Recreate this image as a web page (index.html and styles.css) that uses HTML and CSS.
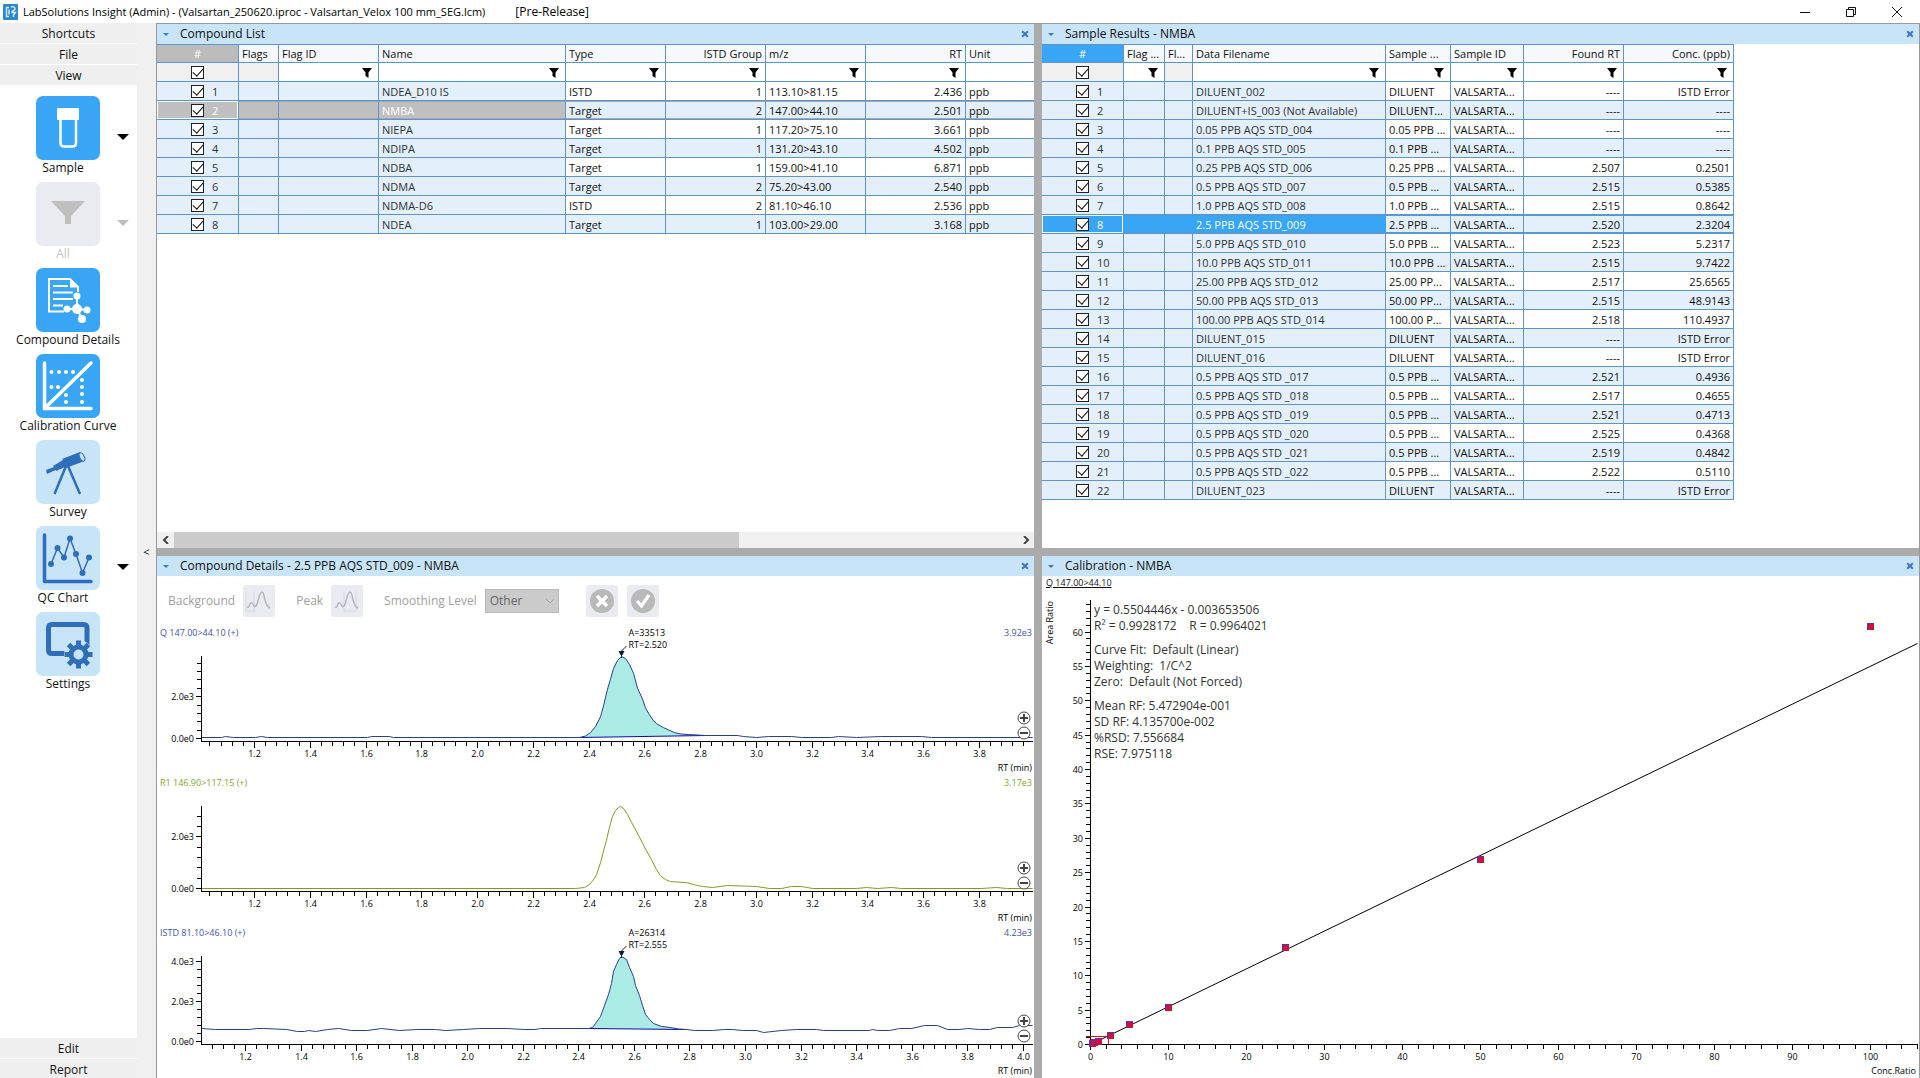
FILE: index.html
```html
<!DOCTYPE html>
<html lang="en">
<head>
<meta charset="utf-8">
<title>LabSolutions Insight</title>
<link rel="stylesheet" href="styles.css">
</head>
<body>
<div class="app">
  <header class="titlebar">
    <svg class="app-icon" viewBox="0 0 15 16" aria-hidden="true">
      <rect width="15" height="16" rx="1" fill="#2b86d3"/>
      <path d="M6 3.500H3.500V12.500H6M6 5.500V10.500M8 3C10 2 12 3 12 5S9 6.500 9 8M8.500 8.500H12.500L10.500 11V13" fill="none" stroke="#d9efff" stroke-width="1.400"/>
    </svg>
    <h1 class="title">LabSolutions Insight (Admin) - (Valsartan_250620.iproc - Valsartan_Velox 100 mm_SEG.lcm)</h1>
    <span class="edition">[Pre-Release]</span>
    <div class="window-buttons">
      <button type="button" aria-label="Minimize"><svg viewBox="0 0 12 12"><path d="M1 6.500H11"/></svg></button>
      <button type="button" aria-label="Restore"><svg viewBox="0 0 12 12"><path d="M1.500 3.500H8.500V10.500H1.500ZM3.500 3.500V1.500H10.500V8.500H8.500"/></svg></button>
      <button type="button" aria-label="Close"><svg viewBox="0 0 12 12"><path d="M1 1L11 11M11 1L1 11"/></svg></button>
    </div>
  </header>

  <div class="main">
    <nav class="sidebar">
      <button type="button" class="group">Shortcuts</button>
      <button type="button" class="group">File</button>
      <button type="button" class="group">View</button>
      <ul class="tools">
        <li class="tool has-menu">
          <button type="button" class="tool-button"><span class="tile on"><svg viewBox="0 0 64 64"><rect x="21" y="12" width="22" height="12" rx="1" fill="#fff"/><path d="M24.500 24V47Q24.500 50.500 28 50.500H36.500Q40 50.500 40 47V24" fill="none" stroke="#fff" stroke-width="2.500"/></svg></span><span class="tool-name">Sample</span></button>
          <button type="button" class="drop" aria-label="Sample options"></button>
        </li>
        <li class="tool has-menu">
          <button type="button" class="tool-button" disabled><span class="tile off"><svg viewBox="0 0 64 64"><path d="M15 19H49L35 34V42H29V34Z" fill="#bfbfbf"/></svg></span><span class="tool-name">All</span></button>
          <button type="button" class="drop" aria-label="Filter options" disabled></button>
        </li>
        <li class="tool">
          <button type="button" class="tool-button"><span class="tile on"><svg viewBox="0 0 64 64"><g fill="none" stroke="#fff" stroke-width="2"><path d="M28 43.500H13V11H34L42 19V24M17 18H32M17 24.500H37M17 31H37M17 37.500H27"/><path d="M41 41V28M41 41L31 41M41 41L51 42M41 41L46 51"/></g><path d="M34 10.500L42.500 19.500H34Z" fill="#fff"/><g fill="#fff"><circle cx="41" cy="41" r="5"/><circle cx="41" cy="28" r="3.500"/><circle cx="31" cy="41" r="3.500"/><circle cx="51" cy="42" r="3.500"/><circle cx="46" cy="51" r="4"/></g></svg></span><span class="tool-name">Compound Details</span></button>
        </li>
        <li class="tool">
          <button type="button" class="tool-button"><span class="tile on"><svg viewBox="0 0 64 64"><path d="M8.500 9V54.500H55M10 53L55 9" fill="none" stroke="#fff" stroke-width="3.500" stroke-linecap="round"/><g fill="#fff"><circle cx="15.500" cy="18" r="2"/><circle cx="23" cy="18" r="2"/><circle cx="30" cy="18" r="2"/><circle cx="37" cy="18" r="2"/><circle cx="15.500" cy="33" r="2"/><circle cx="22" cy="33" r="2"/><circle cx="30" cy="41" r="2"/><circle cx="30" cy="48" r="2"/><circle cx="46" cy="26" r="2"/><circle cx="46" cy="33" r="2"/><circle cx="46" cy="40" r="2"/><circle cx="46" cy="48" r="2"/></g></svg></span><span class="tool-name">Calibration Curve</span></button>
        </li>
        <li class="tool">
          <button type="button" class="tool-button"><span class="tile"><svg viewBox="0 0 64 64"><path d="M10 30L18 27L17 26L27 20L26 19L44 12L48.500 21L30 28L29 27L20 31L19.500 30L11 34Z" fill="#2f6eba"/><ellipse cx="46" cy="17" rx="2.300" ry="4.500" transform="rotate(-25 46 17)" fill="#c8e4f8" stroke="#2f6eba" stroke-width="1"/><path d="M30 26L18.500 54M32 26L44 54" stroke="#2f6eba" stroke-width="2.500" fill="none"/></svg></span><span class="tool-name">Survey</span></button>
        </li>
        <li class="tool has-menu">
          <button type="button" class="tool-button"><span class="tile"><svg viewBox="0 0 64 64"><path d="M8.500 9V55.500H55" fill="none" stroke="#2f6eba" stroke-width="3.500" stroke-linecap="round" stroke-linejoin="round"/><path d="M15 38L21.500 22L28 31.500L34 12.500L40 28L46.500 47L53 31.500" fill="none" stroke="#2f6eba" stroke-width="1.500"/><g fill="#2f6eba"><circle cx="15" cy="38" r="3"/><circle cx="21.500" cy="22" r="3"/><circle cx="28" cy="31.500" r="3"/><circle cx="34" cy="12.500" r="3"/><circle cx="40" cy="28" r="3"/><circle cx="46.500" cy="47" r="3"/><circle cx="53" cy="31.500" r="3"/></g></svg></span><span class="tool-name">QC Chart</span></button>
          <button type="button" class="drop" aria-label="QC Chart options"></button>
        </li>
        <li class="tool">
          <button type="button" class="tool-button"><span class="tile"><svg viewBox="0 0 64 64"><path d="M51 33V16Q51 12.500 47.500 12.500H16Q12.500 12.500 12.500 16V38Q12.500 41.500 16 41.500H29" fill="none" stroke="#2f6eba" stroke-width="5"/><circle cx="42.500" cy="42.500" r="14.500" fill="#c8e4f8"/><circle cx="42.500" cy="42.500" r="7.500" fill="none" stroke="#2f6eba" stroke-width="5"/><path d="M42.500 28.500V33M42.500 52V56.500M28.500 42.500H33M52 42.500H56.500M32.600 32.600L36 36M49 49L52.400 52.400M52.400 32.600L49 36M36 49L32.600 52.400" stroke="#2f6eba" stroke-width="5"/></svg></span><span class="tool-name">Settings</span></button>
        </li>
      </ul>
      <button type="button" class="group">Edit</button>
      <button type="button" class="group">Report</button>
    </nav>
    <button type="button" class="collapse" aria-label="Collapse sidebar">&lt;</button>

    <main class="workspace">
      <section class="panel">
        <div class="panel-head"><span class="caret"></span><h2>Compound List</h2><button type="button" class="close" aria-label="Close Compound List"></button></div>
        <div class="panel-body">
          <table class="grid compounds" id="compounds">
            <colgroup><col class="w82"><col class="w40"><col class="w100"><col class="w187"><col class="w100"><col class="w100"><col class="w100"><col class="w100"><col class="w100"></colgroup>
            <thead>
              <tr><th class="hash">#</th><th>Flags</th><th>Flag ID</th><th>Name</th><th>Type</th><th class="num">ISTD Group</th><th>m/z</th><th class="num">RT</th><th>Unit</th></tr>
            </thead>
            <tbody></tbody>
          </table>
        </div>
        <div class="scrollbar"><button type="button" aria-label="Scroll left"><svg viewBox="0 0 8 8"><path d="M6 0L2 4L6 8"/></svg></button><div class="track"><div class="thumb"></div></div><button type="button" aria-label="Scroll right"><svg viewBox="0 0 8 8"><path d="M2 0L6 4L2 8"/></svg></button></div>
      </section>

      <section class="panel">
        <div class="panel-head"><span class="caret"></span><h2>Sample Results - NMBA</h2><button type="button" class="close" aria-label="Close Sample Results"></button></div>
        <div class="panel-body">
          <table class="grid results" id="results">
            <colgroup><col class="w82"><col class="w41"><col class="w28"><col class="w193"><col class="w65"><col class="w73"><col class="w100"><col class="w110"></colgroup>
            <thead>
              <tr><th class="hash">#</th><th>Flag ...</th><th>Fl...</th><th>Data Filename</th><th>Sample ...</th><th>Sample ID</th><th class="num">Found RT</th><th class="num">Conc. (ppb)</th></tr>
            </thead>
            <tbody></tbody>
          </table>
        </div>
      </section>

      <section class="panel">
        <div class="panel-head"><span class="caret"></span><h2>Compound Details - 2.5 PPB AQS STD_009 - NMBA</h2><button type="button" class="close" aria-label="Close Compound Details"></button></div>
        <div class="toolbar">
          <div class="field"><span>Background</span><button type="button" class="icon-button" aria-label="Background" disabled><svg viewBox="0 0 32 32"><path d="M3 6V26H13M11 6V26" stroke="#d6d9de"/><path d="M4 22C6 24 7 16 9 18S11 23 13 21S16 7 19 7S21 22 27 23" stroke="#b3b6bb" stroke-width="1.500"/></svg></button></div>
          <div class="field"><span>Peak</span><button type="button" class="icon-button" aria-label="Peak" disabled><svg viewBox="0 0 32 32"><path d="M13 26V6M13 26H25V6" stroke="#d6d9de"/><path d="M4 22C6 24 7 16 9 18S11 23 13 21S16 7 19 7S21 22 27 23" stroke="#b3b6bb" stroke-width="1.500"/></svg></button></div>
          <div class="field"><label for="smoothing">Smoothing Level</label><div class="select"><select id="smoothing" disabled><option>Other</option></select><svg viewBox="0 0 10 6" aria-hidden="true"><path d="M1 1L5 5L9 1"/></svg></div></div>
          <div class="actions">
            <button type="button" class="icon-button" aria-label="Cancel" disabled><svg viewBox="0 0 32 32"><circle cx="16" cy="16" r="12" fill="#b9b9b9"/><path d="M11 11L21 21M21 11L11 21" stroke="#fff" stroke-width="3.500"/></svg></button>
            <button type="button" class="icon-button" aria-label="Apply" disabled><svg viewBox="0 0 32 32"><circle cx="16" cy="16" r="12" fill="#b9b9b9"/><path d="M10 16L14.500 21L22 10" stroke="#fff" stroke-width="3.200"/></svg></button>
          </div>
        </div>
        <div class="traces">
          <div class="trace" id="trace-q"></div>
          <div class="trace" id="trace-r1"></div>
          <div class="trace" id="trace-istd"></div>
        </div>
      </section>

      <section class="panel">
        <div class="panel-head"><span class="caret"></span><h2>Calibration - NMBA</h2><button type="button" class="close" aria-label="Close Calibration"></button></div>
        <div class="calibration">
          <div class="plot" id="calibration"></div>
          <a class="channel" href="#calibration">Q 147.00&gt;44.10</a>
          <div class="fit">
            <p>y = 0.5504446x - 0.003653506<br>R² = 0.9928172 &nbsp;&nbsp; R = 0.9964021</p>
            <p>Curve Fit:&nbsp; Default (Linear)<br>Weighting:&nbsp; 1/C^2<br>Zero:&nbsp; Default (Not Forced)</p>
            <p>Mean RF: 5.472904e-001<br>SD RF: 4.135700e-002<br>%RSD: 7.556684<br>RSE: 7.975118</p>
          </div>
        </div>
      </section>
    </main>
  </div>
</div>
<script src="app.js"></script>
</body>
</html>
```
FILE: styles.css
```css
* { box-sizing: border-box; }

body {
  margin: 0;
  background: #fff;
  color: #111;
  font: 12px/16px "Open Sans", "Noto Sans", sans-serif;
}

h1, h2, p, ul { margin: 0; padding: 0; font: inherit; }

button {
  margin: 0;
  padding: 0;
  border: 0;
  background: none;
  color: inherit;
  font: inherit;
}

.app { display: flex; flex-direction: column; height: 100vh; min-height: 760px; }

/* Title bar */
.titlebar { display: flex; align-items: center; height: 23px; padding-left: 3px; color: #000; font-size: 11px; }
.app-icon { width: 15px; height: 16px; margin-right: 5px; }
.edition { margin-left: 30px; font-size: 12px; }
.window-buttons { display: flex; margin-left: auto; }
.window-buttons button { display: grid; place-items: center; width: 46px; height: 22px; }
.window-buttons svg { width: 12px; height: 12px; fill: none; stroke: #111; }

.main { display: flex; flex: 1; min-height: 0; overflow: hidden; background: #f0f0f0; }

/* Sidebar */
.sidebar { display: flex; flex-direction: column; width: 137px; margin-bottom: -2px; }
.group { height: 21px; padding-top: 1px; border-bottom: 1px solid #fff; background: #efefef; text-align: center; }
.tools { flex: 1; padding: 10px 0 0; background: #fff; list-style: none; }
.tool { display: grid; grid-template-columns: 136px; height: 86px; }
.tool.has-menu { grid-template-columns: 109px 27px; }
.tool-button { display: flex; flex-direction: column; align-items: center; white-space: nowrap; }
.has-menu .tool-button { align-items: flex-end; padding-right: 9px; }
.has-menu .tool-name { width: 74px; text-align: center; }
.tile { width: 64px; height: 64px; border-radius: 7px; background: #c8e4f8; }
.tile.on { background: #38a5f5; }
.tile.off { background: #e9ebf0; }
.tile svg { display: block; width: 64px; height: 64px; }
.tool-button:disabled { color: #c4c4c4; }
.drop { display: flex; justify-content: center; padding-top: 38px; }
.drop::before { content: ""; height: 6px; border: 6px solid transparent; border-top-color: #000; border-bottom: 0; }
.drop:disabled::before { border-top-color: #bfbfbf; }
.collapse { width: 19px; padding-top: 2px; font-size: 11px; }

/* Panels */
.workspace {
  display: grid;
  flex: 1;
  grid-template-columns: minmax(0, 1fr) minmax(0, 1fr);
  grid-template-rows: minmax(0, 524fr) minmax(0, 522fr);
  gap: 8px;
  border: 1px solid #999;
  border-bottom: 0;
  background: #ababab;
}
.panel { display: flex; flex-direction: column; min-height: 0; overflow: hidden; background: #fff; }
.panel-head { display: flex; flex: none; align-items: center; height: 20px; padding: 0 5px 0 6px; background: #c8e4f9; }
.caret { border: 3px solid transparent; border-top-color: #3f78bd; border-bottom: 0; }
.panel-head h2 { margin-left: 11px; }
.close { position: relative; width: 8px; height: 8px; margin-left: auto; }
.close::before, .close::after { content: ""; position: absolute; top: 3px; left: 0; width: 8px; height: 2px; background: #3f78bd; transform: rotate(45deg); }
.close::after { transform: rotate(-45deg); }
.panel-body { flex: 1; min-height: 0; overflow: hidden; }

/* Data grids */
.grid { border-top: 1px solid #5f93c9; border-spacing: 0; table-layout: fixed; font-size: 11px; line-height: 16px; }
.compounds { width: 909px; }
.results { width: 692px; }
.w28 { width: 28px; } .w40 { width: 40px; } .w41 { width: 41px; } .w65 { width: 65px; } .w73 { width: 73px; }
.w82 { width: 82px; } .w100 { width: 100px; } .w110 { width: 110px; } .w187 { width: 187px; } .w193 { width: 193px; }
.grid th, .grid td {
  height: 19px;
  padding: 1px 3px 0;
  overflow: hidden;
  border-right: 1px solid #5f93c9;
  border-bottom: 1px solid #5f93c9;
  text-align: left;
  white-space: nowrap;
}
.grid th { height: 18px; background: #f5f8fc; font-weight: normal; }
.grid .num { text-align: right; }
.grid th.hash { background: #bcbcbc; color: #fff; text-align: center; }
.results th.hash { background: #38a5f5; }
.grid .key { background: #e3effa; color: #2c3338; }
.grid tr:nth-child(odd) td { background: #e3effa; }
.grid tr:nth-child(even) td:not(.key) { background: #fff; }
.grid .filters td.blank { background: #f0f0f0; }
.grid .filters td:not(.blank) { background: #fff; }
.filters button { display: block; width: 10px; height: 10px; margin: 0 3px 0 auto; }
.filters svg { display: block; width: 10px; height: 10px; }
.row-id { display: flex; align-items: center; gap: 8px; padding-left: 31px; }
.row-id input {
  display: grid;
  flex: none;
  place-items: center;
  width: 13px;
  height: 13px;
  margin: 0;
  border: 1px solid #222;
  background: #fff;
  appearance: none;
}
.row-id input:checked::before {
  content: "";
  width: 9px;
  height: 5px;
  margin-bottom: 3px;
  border-left: 1px solid #111;
  border-bottom: 1px solid #111;
  transform: rotate(-48deg);
}
.grid tr.current td { box-shadow: inset 0 1px #a0a8b0, inset 0 -1px #a0a8b0; }
.grid tr.current td.key { background: #bfbfbf; color: #fff; }
.results tr.current td { box-shadow: inset 0 1px #4a9de0, inset 0 -1px #4a9de0; }
.results tr.current td.key { background: #38a5f5; border-right-color: #38a5f5; color: #fff; }
.grid tr.current td:first-child { box-shadow: inset 0 0 0 1px #fff; }

/* Horizontal scroll bar */
.scrollbar { display: flex; flex: none; height: 16px; background: #f0f0f0; }
.scrollbar button { display: grid; place-items: center; width: 17px; }
.scrollbar svg { width: 8px; height: 8px; fill: none; stroke: #444; stroke-width: 2; }
.track { flex: 1; }
.thumb { width: 67%; height: 100%; background: #cbcbcb; }

/* Compound details */
.toolbar { display: flex; flex: none; align-items: center; gap: 21px; height: 49px; padding-left: 11px; color: #a0a0a0; }
.field { display: flex; align-items: center; gap: 8px; }
.icon-button { width: 32px; height: 32px; border-radius: 3px; background: #e9ebf0; }
.icon-button svg { display: block; fill: none; }
.select { display: grid; align-items: center; }
.select > * { grid-area: 1 / 1; }
.select svg { justify-self: end; width: 10px; height: 6px; margin-right: 4px; fill: none; stroke: #a4a4a4; }
.select select {
  width: 74px;
  height: 24px;
  padding: 0 4px;
  border: 1px solid #b8b8b8;
  border-radius: 0;
  background: #cbcbcb;
  color: #666;
  font: inherit;
  opacity: 1;
  appearance: none;
}
.actions { display: flex; gap: 9px; margin-left: 6px; }
.traces { display: grid; flex: 1; grid-template-rows: minmax(0, 150fr) minmax(0, 150fr) minmax(0, 153fr); min-height: 0; }
.trace { position: relative; min-height: 0; overflow: hidden; }
.zoom { position: absolute; right: 3px; bottom: 35px; display: grid; gap: 1px; }
.zoom button { width: 14px; height: 14px; }
.zoom svg { display: block; width: 14px; height: 14px; fill: #fff; stroke: #444; }

/* Calibration */
.calibration { position: relative; flex: 1; min-height: 0; }
.plot { position: absolute; inset: 0; }
.channel { position: absolute; top: 0; left: 4px; color: #111; font-size: 9px; line-height: 14px; }
.fit { position: absolute; top: 26px; left: 52px; display: grid; gap: 8px; color: #333; }

/* Chart parts */
.chart { display: block; width: 100%; height: 100%; font-size: 9px; }
.chart .axis { fill: none; stroke: #000; shape-rendering: crispEdges; }
.chart .curve { fill: none; }
.chart .end { text-anchor: end; }
.chart .mid { text-anchor: middle; }
```
FILE: app.js
```js
const FUNNEL = '<svg viewBox="0 0 10 10"><path d="M0 0H10L6.500 4.500V10L3.500 8V4.500Z"/></svg>';

const compounds = [
  ['NDEA_D10 IS', 'ISTD', 1, '113.10>81.15', '2.436'],
  ['NMBA', 'Target', 2, '147.00>44.10', '2.501'],
  ['NIEPA', 'Target', 1, '117.20>75.10', '3.661'],
  ['NDIPA', 'Target', 1, '131.20>43.10', '4.502'],
  ['NDBA', 'Target', 1, '159.00>41.10', '6.871'],
  ['NDMA', 'Target', 2, '75.20>43.00', '2.540'],
  ['NDMA-D6', 'ISTD', 2, '81.10>46.10', '2.536'],
  ['NDEA', 'Target', 1, '103.00>29.00', '3.168'],
].map(([name, type, group, mz, rt]) => ['', '', name, type, group, mz, rt, 'ppb']);

const NONE = '----';
const results = [
  ['DILUENT_002', 'DILUENT', NONE, 'ISTD Error'],
  ['DILUENT+IS_003 (Not Available)', 'DILUENT...', NONE, NONE],
  ['0.05 PPB AQS STD_004', '0.05 PPB ...', NONE, NONE],
  ['0.1 PPB AQS STD_005', '0.1 PPB ...', NONE, NONE],
  ['0.25 PPB AQS STD_006', '0.25 PPB ...', '2.507', '0.2501'],
  ['0.5 PPB AQS STD_007', '0.5 PPB ...', '2.515', '0.5385'],
  ['1.0 PPB AQS STD_008', '1.0 PPB ...', '2.515', '0.8642'],
  ['2.5 PPB AQS STD_009', '2.5 PPB ...', '2.520', '2.3204'],
  ['5.0 PPB AQS STD_010', '5.0 PPB ...', '2.523', '5.2317'],
  ['10.0 PPB AQS STD_011', '10.0 PPB ...', '2.515', '9.7422'],
  ['25.00 PPB AQS STD_012', '25.00 PP...', '2.517', '25.6565'],
  ['50.00 PPB AQS STD_013', '50.00 PP...', '2.515', '48.9143'],
  ['100.00 PPB AQS STD_014', '100.00 P...', '2.518', '110.4937'],
  ['DILUENT_015', 'DILUENT', NONE, 'ISTD Error'],
  ['DILUENT_016', 'DILUENT', NONE, 'ISTD Error'],
  ['0.5 PPB AQS STD _017', '0.5 PPB ...', '2.521', '0.4936'],
  ['0.5 PPB AQS STD _018', '0.5 PPB ...', '2.517', '0.4655'],
  ['0.5 PPB AQS STD _019', '0.5 PPB ...', '2.521', '0.4713'],
  ['0.5 PPB AQS STD _020', '0.5 PPB ...', '2.525', '0.4368'],
  ['0.5 PPB AQS STD _021', '0.5 PPB ...', '2.519', '0.4842'],
  ['0.5 PPB AQS STD _022', '0.5 PPB ...', '2.522', '0.5110'],
  ['DILUENT_023', 'DILUENT', NONE, 'ISTD Error'],
].map(([file, name, rt, conc]) => ['', '', file, name, 'VALSARTA...', rt, conc]);

const esc = value => String(value).replace(/>/g, '&gt;');

function fillGrid(id, rows, { keys, numeric, filters, current }) {
  const idCell = (label, text) =>
    `<td class="key${text ? '' : ' blank'}"><div class="row-id"><input type="checkbox" checked aria-label="${label}">${text}</div></td>`;
  const filterRow = rows[0].map((_, i) => filters.includes(i)
    ? `<td><button type="button" aria-label="Filter">${FUNNEL}</button></td>`
    : `<td${i < 2 ? ' class="blank"' : ''}></td>`).join('');
  const body = rows.map((row, n) => {
    const cells = row.map((value, i) => {
      const kind = i < keys ? 'key' : numeric.includes(i) ? 'num' : '';
      return `<td class="${kind}">${esc(value)}</td>`;
    }).join('');
    return `<tr${n + 1 === current ? ' class="current"' : ''}>${idCell('Row ' + (n + 1), n + 1)}${cells}</tr>`;
  }).join('');
  document.querySelector(`#${id} tbody`).innerHTML =
    `<tr class="filters">${idCell('All rows', '')}${filterRow}</tr>${body}`;
}

fillGrid('compounds', compounds, { keys: 3, numeric: [4, 6], filters: [1, 2, 3, 4, 5, 6], current: 2 });
fillGrid('results', results, { keys: 3, numeric: [5, 6], filters: [0, 2, 3, 4, 5, 6], current: 8 });

/* Traces are sampled on a grid 831 units wide; heights share the unit of `peak`. */
const traces = [
  {
    id: 'trace-q', title: 'Q 147.00>44.10 (+)', max: '3.92e3', full: 3920, peak: 83, color: '#2a3f80', ink: '#3f55a0',
    first: 1.2, firstAt: 53, step: 55.75, area: 'A=33513', rt: 'RT=2.520', apex: 420, span: [378, 504],
    points: [[0,1],[20,1],[24,2],[32,1],[54,1],[60,2],[66,1],[166,1],[170,2],[188,2],[192,1],[378,1],[384,2.5],[389,6],[394,12],[399,22],[402,33],[406,50],[409,60],[412,71],[416,79],[420,83],[424,81],[428,75],[432,66],[436,51],[441,40],[444,31],[448,24],[452,18],[455,15],[462,11],[473,6],[480,4.5],[487,4],[504,3],[536,3],[542,2],[555,1],[567,2],[590,2],[600,1],[630,1],[637,2],[655,1],[680,2],[720,2],[730,1],[831,1]],
  },
  {
    id: 'trace-r1', title: 'R1 146.90>117.15 (+)', max: '3.17e3', full: 3170, peak: 83, color: '#84982a', ink: '#86a032',
    first: 1.2, firstAt: 53, step: 55.75,
    points: [[0,0],[374,0],[383,1],[388,4],[392,9],[395,14],[399,26],[402,38],[405,49],[408,62],[411,73],[414,79],[417,82],[419,83],[422,81],[426,75],[430,67],[437,54],[444,40],[450,29],[455,19],[459,13],[464,9],[469,7],[485,6],[494,3.5],[501,2],[511,1],[526,3],[555,2],[568,0],[580,0],[590,2],[600,2],[611,0],[655,0],[665,1],[676,0],[690,1],[700,0],[780,0],[795,1],[806,0],[831,0]],
  },
  {
    id: 'trace-istd', title: 'ISTD 81.10>46.10 (+)', max: '4.23e3', full: 4230, peak: 85, color: '#2a3f80', ink: '#3f55a0',
    first: 1.2, firstAt: 44, step: 55.56, area: 'A=26314', rt: 'RT=2.555', apex: 420, span: [387, 485],
    points: [[0,13],[14,12],[48,12],[55,13],[62,13],[85,12],[96,10],[103,10],[107,11],[114,10],[126,12],[137,13],[150,11],[166,11],[180,13],[198,11],[216,12],[234,12],[244,11],[262,12],[278,13],[305,13],[323,12],[334,12],[339,13],[387,13],[391,14],[394,18],[399,25],[403,36],[407,47],[410,58],[412,70],[415,77],[418,83],[420,85],[425,82],[428,74],[432,65],[434,56],[438,46],[441,36],[444,27],[448,22],[452,18],[460,15],[469,14],[477,12.5],[485,12],[493,11],[511,11],[523,12],[531,12],[541,11],[555,11],[562,9],[580,11],[595,12],[615,12],[622,11],[668,11],[671,12],[676,11],[688,11],[698,13],[710,13],[723,16],[736,16],[746,12],[758,12],[766,13],[778,12],[788,12],[796,14],[811,14],[818,16],[831,16]],
  },
];

const path = pts => 'M' + pts.map(p => p.map(v => v.toFixed(1)).join(' ')).join('L');
const tick = v => Math.round(v) + 0.5;

function drawTrace(t) {
  const host = document.getElementById(t.id);
  const w = host.clientWidth, h = host.clientHeight;
  const left = 44, bottom = h - 34, zero = bottom - 3, top = 31;
  const kx = (w - 2 - left) / 831, ky = (zero - top) / t.peak;
  const X = x => left + 0.5 + x * kx, Y = y => zero + 0.5 - y * ky;

  let axis = `M${left + 0.5} ${top}V${bottom + 0.5}H${w - 1}`, labels = '';
  for (let n = 0; n * 400 <= t.full; n++) {
    const major = n % 5 === 0, y = tick(zero - n * 400 / t.full * (zero - top));
    axis += `M${left} ${y}h${major ? -5 : -4}`;
    if (major) labels += `<text class="end" x="${left - 7}" y="${y + 3}">${(n / 5 * 2).toFixed(1)}e${n ? 3 : 0}</text>`;
  }
  for (let n = -4; ; n++) {
    const raw = t.firstAt + n * t.step / 5;
    if (raw > 829) break;
    if (raw < 0) continue;
    const x = tick(left + raw * kx), major = n % 5 === 0;
    axis += `M${x} ${bottom}v${major ? 7 : 5}`;
    if (major) labels += `<text class="mid" x="${x}" y="${bottom + 16}">${(t.first + n / 25).toFixed(1)}</text>`;
  }

  const pts = t.points.map(([x, y]) => [X(x), Y(y)]);
  let peak = '';
  if (t.span) {
    const inside = t.points.filter(p => p[0] >= t.span[0] && p[0] <= t.span[1]).map(([x, y]) => [X(x), Y(y)]);
    const a = X(t.apex);
    peak = `<path d="${path(inside)}Z" fill="#abebe6"/>
      <path d="${path([inside[0], inside[inside.length - 1]])}" stroke="#0a0aa8"/>
      <path d="M${a - 3} ${top - 5}h6l-2 4h-2z" fill="#101a40"/><path d="M${a} ${top - 5}l5 -5M${a} ${top - 2}v4" stroke="#101a40"/>
      <text x="${a + 7}" y="11">${t.area}</text><text x="${a + 7}" y="23">${t.rt}</text>`;
  }
  host.innerHTML = `<svg class="chart">${peak}
    <path class="curve" d="${path(pts)}" stroke="${t.color}"/>
    <path class="axis" d="${axis}"/>${labels}
    <text x="3" y="11" fill="${t.ink}">${esc(t.title)}</text>
    <text class="end" x="${w - 2}" y="11" fill="${t.ink}">${t.max}</text>
    <text class="end" x="${w - 2}" y="${h - 4}">RT (min)</text></svg>
    <div class="zoom">
      <button type="button" aria-label="Zoom in"><svg viewBox="0 0 14 14"><circle cx="7" cy="7" r="6"/><path d="M3 7H11M7 3V11" stroke-width="2"/></svg></button>
      <button type="button" aria-label="Zoom out"><svg viewBox="0 0 14 14"><circle cx="7" cy="7" r="6"/><path d="M3 7H11" stroke-width="2"/></svg></button>
    </div>`;
}

function drawCalibration() {
  const host = document.getElementById('calibration');
  const w = host.clientWidth, h = host.clientHeight;
  const left = 48, bottom = h - 34, top = 24;
  const kx = (w - 2 - left) / 106, ky = (bottom - top) / 64.6;
  const X = x => left + 0.5 + x * kx, Y = y => bottom + 0.5 - y * ky;
  let axis = `M${left + 0.5} ${top}V${bottom + 0.5}H${w - 2}`, labels = '';
  for (let v = 0; v <= 64; v++) {
    const y = tick(bottom - v * ky), major = v % 5 === 0;
    axis += `M${left} ${y}h${major ? -5 : -4}`;
    if (major) labels += `<text class="end" x="${left - 7}" y="${y + 3}">${v}</text>`;
  }
  for (let v = 0; v <= 106; v += 2) {
    const x = tick(left + v * kx), major = v % 10 === 0;
    axis += `M${x} ${bottom}v${major ? 6 : 5}`;
    if (major) labels += `<text class="mid" x="${x}" y="${bottom + 16}">${v}</text>`;
  }
  const standards = [[0.25, 0.13], [0.5, 0.3], [1, 0.5], [2.5, 1.3], [5, 2.9], [10, 5.4], [25, 14.1], [50, 26.9], [100, 60.8]];
  const marks = standards.map(([x, y]) => {
    const mx = Math.floor(X(x)) - 3, my = Math.floor(Y(y)) - 3;
    return `<path d="M${mx} ${my}h7v7h-7z" fill="#c8143c"/><path d="M${mx + 0.5} ${my + 7}v-6.500h6.500" fill="none" stroke="#5a32b4"/>`;
  }).join('');
  host.innerHTML = `<svg class="chart"><path class="axis" d="${axis}"/>${labels}
    <path d="M${X(0)} ${Y(0)}L${X(106)} ${Y(58.35)}" stroke="#000"/>
    <path d="M${left - 4} ${tick(Y(1.3))}H${X(2.32)}V${bottom}" fill="none" stroke="#c01028"/>${marks}
    <text class="end" transform="translate(11 25) rotate(-90)">Area Ratio</text>
    <text class="end" x="${w - 3}" y="${h - 4}">Conc.Ratio</text></svg>`;
}

function draw() {
  traces.forEach(drawTrace);
  drawCalibration();
}

draw();
window.addEventListener('resize', draw);
```
